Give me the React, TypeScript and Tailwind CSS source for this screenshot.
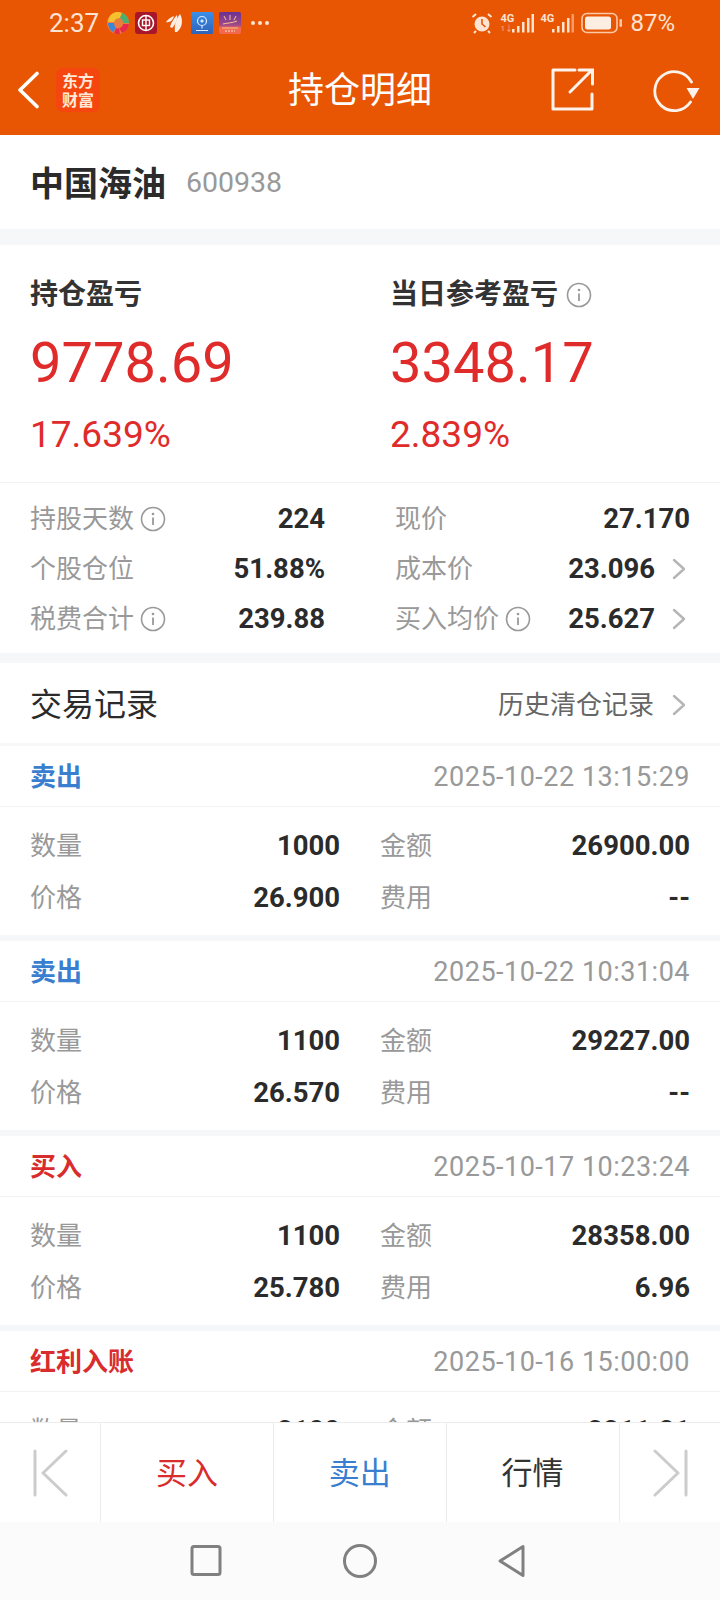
import React from "react";

const font = "font-['Roboto','Noto_Sans_CJK_SC',sans-serif]";

function Info() {
  return (
    <svg width="26" height="26" viewBox="0 0 26 26" fill="none" className="shrink-0">
      <circle cx="13" cy="13" r="11.5" stroke="#999" strokeWidth="1.6" />
      <circle cx="13" cy="8" r="1.3" fill="#999" />
      <path d="M13 11.5V19" stroke="#999" strokeWidth="1.8" />
    </svg>
  );
}

function Chev() {
  return (
    <svg width="14" height="22" viewBox="0 0 14 22" fill="none" className="shrink-0">
      <path d="M2 2l10 9-10 9" stroke="#b5b5b5" strokeWidth="2.4" strokeLinecap="round" strokeLinejoin="round" />
    </svg>
  );
}

function Stat({ label, info, value, chev }: { label: string; info?: boolean; value: string; chev?: boolean }) {
  return (
    <div className="flex h-[50px] items-center">
      <span className="text-[26px] text-[#999] leading-none">{label}</span>
      {info && <span className="ml-[6px] flex"><Info /></span>}
      <span className="ml-auto text-[27.5px] font-bold text-[#2b2b2b] leading-none">{value}</span>
      {chev && <span className="ml-[17px] mr-[4px] flex"><Chev /></span>}
    </div>
  );
}

function Cell({ label, value, pad }: { label: string; value: string; pad?: boolean }) {
  return (
    <div className={`flex h-[52px] items-center ${pad ? "pl-[40px]" : ""}`}>
      <span className="text-[26px] text-[#999] leading-none">{label}</span>
      <span className="ml-auto text-[27.5px] font-bold text-[#2b2b2b] leading-none">{value}</span>
    </div>
  );
}

function Trade({ kind, color, date, a, b, c, d }: { kind: string; color: string; date: string; a: string; b: string; c: string; d: string }) {
  return (
    <section className="bg-white mb-[6px]">
      <div className="h-[61px] flex items-center justify-between px-[30px] pt-[2px] border-b border-[#f2f2f2]">
        <span className="text-[26px] font-bold leading-none" style={{ color }}>{kind}</span>
        <span className="text-[27px] text-[#999] leading-none tracking-[0.5px]">{date}</span>
      </div>
      <div className="grid grid-cols-[310px_1fr] px-[30px] pt-[13px] pb-[11px]">
        <Cell label="数量" value={a} />
        <Cell label="金额" value={b} pad />
        <Cell label="价格" value={c} />
        <Cell label="费用" value={d} pad />
      </div>
    </section>
  );
}

function Signal({ second }: { second?: boolean }) {
  return (
    <div className={`relative w-[34px] h-[22px] ${second ? "ml-[6px]" : "ml-[7px]"}`}>
      <span className="absolute left-0 top-[1px] text-[11px] font-bold leading-none font-['Liberation_Sans_Narrow','Roboto',sans-serif]">4G</span>
      {!second && <span className="absolute left-0 top-[13px] text-[8px] leading-none text-[#fbb58a]">1↓</span>}
      <svg width="34" height="22" viewBox="0 0 34 22" className="absolute inset-0">
        <rect x="12" y="17" width="2.5" height="3.5" fill="#fde3d2" />
        <rect x="17" y="14" width="2.5" height="6.5" fill="#fde3d2" />
        <rect x="22" y="10" width="2.5" height="10.5" fill="#fde3d2" />
        <rect x="27" y="6" width="2.5" height="14.5" fill="#fde3d2" />
        <rect x="31.5" y="2" width="2.5" height="18.5" fill={second ? "#f59a6a" : "#fde3d2"} />
      </svg>
    </div>
  );
}

function StatusBar() {
  return (
    <div className="h-[46px] flex items-center pl-[49px] pr-[45px] pb-[1px] text-[#fde3d2]">
      <span className="text-[26px] leading-none">2:37</span>
      <div className="ml-[8px] flex items-center">
        <svg width="22" height="22" viewBox="0 0 22 22">
          <circle cx="11" cy="11" r="11" fill="#f5f0e6" opacity="0.25" />
          <path d="M3 4a10.5 10.5 0 0 1 12-3l-2 5c-3 0-5 1-6 4H1a11 11 0 0 1 2-6z" fill="#f7c12e" />
          <path d="M15 1a11 11 0 0 1 7 10l-6 0c0-2-1-4-3-5z" fill="#4caf6e" />
          <path d="M22 12a11 11 0 0 1-7 9l-3-5c2 0 4-2 4-4z" fill="#e8294c" />
          <path d="M13 22a11 11 0 0 1-6-1l2-5c1 1 2 1 3 0z" fill="#e8294c" />
          <path d="M6 20a11 11 0 0 1-5-9l6 0c0 2 1 4 2 5z" fill="#3b86d8" />
        </svg>
        <svg width="22" height="22" viewBox="0 0 22 22" className="ml-[6px]">
          <rect width="22" height="22" rx="3" fill="#a8162a" />
          <circle cx="11" cy="11" r="7.5" fill="none" stroke="#fff" strokeWidth="1.6" />
          <rect x="7.5" y="8" width="7" height="5.5" fill="none" stroke="#fff" strokeWidth="1.4" />
          <path d="M11 3.5v15" stroke="#fff" strokeWidth="1.4" />
        </svg>
        <svg width="18" height="18" viewBox="0 0 18 18" className="ml-[8px]">
          <path d="M1 8C3 5 6 3 9 2c-1 4-4 7-8 6z" fill="#fdeee3" />
          <path d="M5 13C6 9 9 4 12 1c1 4-1 9-5 13z" fill="#fdeee3" />
          <path d="M10 18C9 12 11 5 15 0c3 5 3 13-3 18z" fill="#fdeee3" />
        </svg>
        <svg width="22" height="22" viewBox="0 0 22 22" className="ml-[8px]">
          <defs>
            <linearGradient id="cam" x1="0" y1="0" x2="0" y2="1">
              <stop offset="0" stopColor="#3b8fe8" />
              <stop offset="1" stopColor="#2f62b8" />
            </linearGradient>
            <linearGradient id="sun" x1="0" y1="0" x2="0" y2="1">
              <stop offset="0" stopColor="#6a3096" />
              <stop offset="0.6" stopColor="#a04a8a" />
              <stop offset="0.72" stopColor="#f2694f" />
              <stop offset="1" stopColor="#f2694f" />
            </linearGradient>
          </defs>
          <rect width="22" height="22" rx="1.5" fill="url(#cam)" />
          <circle cx="11" cy="9" r="4.5" fill="none" stroke="#dbeafe" strokeWidth="1.2" />
          <circle cx="11" cy="9" r="1.6" fill="#dbeafe" />
          <path d="M11 13.5v3M5 18.5h12" stroke="#dbeafe" strokeWidth="1.2" />
        </svg>
        <svg width="22" height="22" viewBox="0 0 22 22" className="ml-[6px]">
          <rect width="22" height="22" rx="2" fill="url(#sun)" />
          <path d="M4 12c4-1 9-1 14-3M3 16h16" stroke="#f6c48b" strokeWidth="1" fill="none" />
          <path d="M11 8V3M15 8l2-4M7 8L5 4" stroke="#f6c48b" strokeWidth="1" />
          <path d="M6 19h10" stroke="#ffe3d0" strokeWidth="1" strokeDasharray="2 1" />
        </svg>
      </div>
      <span className="ml-[10px] flex gap-[3px]">
        <i className="block w-[4px] h-[4px] rounded-full bg-[#fde3d2]" />
        <i className="block w-[4px] h-[4px] rounded-full bg-[#fde3d2]" />
        <i className="block w-[4px] h-[4px] rounded-full bg-[#fde3d2]" />
      </span>
      <div className="ml-auto flex items-center">
        <svg width="22" height="22" viewBox="0 0 22 22" fill="none">
          <circle cx="11" cy="12" r="7.5" fill="#fde3d2" />
          <path d="M11 7v5l3.5 3" stroke="#e85604" strokeWidth="1.6" />
          <path d="M1.5 5L5 2M20.5 5L17 2M5 19l-2 2M17 19l2 2" stroke="#fde3d2" strokeWidth="2" />
        </svg>
        <Signal />
        <Signal second />
        <svg width="42" height="22" viewBox="0 0 42 22" fill="none" className="ml-[7px]">
          <rect x="1" y="1.5" width="35" height="19" rx="5" stroke="#fbc9a8" strokeWidth="1.6" />
          <rect x="4" y="4.5" width="26" height="13" rx="2.5" fill="#fdeee3" />
          <rect x="38.5" y="7" width="2.5" height="8" rx="1.2" fill="#fbc9a8" />
        </svg>
        <span className="ml-[7px] text-[24px] leading-none">87%</span>
      </div>
    </div>
  );
}

export default function App() {
  return (
    <div className={`w-[720px] h-[1600px] flex flex-col bg-[#f6f7f8] overflow-hidden ${font}`}>
      <header className="h-[135px] shrink-0 bg-[#e85604]">
        <StatusBar />
        <div className="h-[89px] relative flex items-center justify-center">
          <h1 className="text-[36px] leading-none text-white font-normal">持仓明细</h1>
          <div className="absolute left-[17px] top-[22px] flex items-center">
            <svg width="24" height="38" viewBox="0 0 24 38" fill="none">
              <path d="M20 2.5L3 19l17 16.5" stroke="#fff" strokeWidth="3.6" strokeLinecap="round" strokeLinejoin="round" />
            </svg>
            <div className="ml-[15px] w-[44px] h-[44px] rounded-[7px] bg-[#f5460f] flex flex-col items-center justify-center text-[#ffe9d8] text-[16px] font-bold leading-[19px] font-['Noto_Sans_CJK_SC',serif]">
              <span>东方</span>
              <span>财富</span>
            </div>
          </div>
          <svg width="44" height="44" viewBox="0 0 44 44" fill="none" className="absolute left-[551px] top-[22px]">
            <path d="M24 2H2v39h39V26" stroke="#fdf3ec" strokeWidth="3" strokeLinejoin="round" strokeLinecap="round" />
            <path d="M19 24L40 3M28 2h13.5v14" stroke="#fdf3ec" strokeWidth="3" strokeLinecap="round" />
          </svg>
          <svg width="48" height="44" viewBox="0 0 48 44" fill="none" className="absolute left-[653px] top-[22px]">
            <path d="M38.5 14A19.5 19.5 0 1 0 37.5 34" stroke="#fdf3ec" strokeWidth="2.8" strokeLinecap="round" />
            <path d="M33.5 20h13l-6.5 11z" fill="#fdf3ec" />
          </svg>
        </div>
      </header>

      <main className="flex-1 min-h-0 overflow-hidden">
        <section className="h-[94px] bg-white flex items-center pl-[30px] pt-[3px] mb-[16px]">
          <span className="text-[34px] font-bold text-[#2b2b2b] leading-none">中国海油</span>
          <span className="ml-[20px] text-[28.5px] text-[#999] leading-none">600938</span>
        </section>

        <section className="bg-white h-[238px] border-b border-[#f2f2f2] flex pl-[30px] pt-[35px]">
          <div className="w-[360px]">
            <div className="h-[30px] flex items-center text-[28px] font-bold text-[#333] leading-none">持仓盈亏</div>
            <div className="mt-[20px] text-[56px] text-[#e02b2b] leading-[66px]">9778.69</div>
            <div className="mt-[19px] text-[37px] text-[#e02b2b] leading-[40px]">17.639%</div>
          </div>
          <div>
            <div className="h-[30px] flex items-center text-[28px] font-bold text-[#333] leading-none">
              当日参考盈亏
              <span className="ml-[8px] flex"><Info /></span>
            </div>
            <div className="mt-[20px] text-[56px] text-[#e02b2b] leading-[66px]">3348.17</div>
            <div className="mt-[19px] text-[37px] text-[#e02b2b] leading-[40px]">2.839%</div>
          </div>
        </section>

        <section className="bg-white h-[170px] grid grid-cols-[295px_295px] gap-x-[70px] pl-[30px] pt-[11px] mb-[10px]">
          <div>
            <Stat label="持股天数" info value="224" />
            <Stat label="个股仓位" value="51.88%" />
            <Stat label="税费合计" info value="239.88" />
          </div>
          <div>
            <Stat label="现价" value="27.170" />
            <Stat label="成本价" value="23.096" chev />
            <Stat label="买入均价" info value="25.627" chev />
          </div>
        </section>

        <section className="bg-white h-[80px] flex items-center pl-[30px] pr-[34px] pt-[3px] mb-[3px]">
          <span className="text-[32px] text-[#2b2b2b] leading-none">交易记录</span>
          <span className="ml-auto text-[26px] text-[#666] leading-none">历史清仓记录</span>
          <span className="ml-[18px] flex"><Chev /></span>
        </section>

        <Trade kind="卖出" color="#3a7fcf" date="2025-10-22 13:15:29" a="1000" b="26900.00" c="26.900" d="--" />
        <Trade kind="卖出" color="#3a7fcf" date="2025-10-22 10:31:04" a="1100" b="29227.00" c="26.570" d="--" />
        <Trade kind="买入" color="#d92c2c" date="2025-10-17 10:23:24" a="1100" b="28358.00" c="25.780" d="6.96" />
        <Trade kind="红利入账" color="#d92c2c" date="2025-10-16 15:00:00" a="2100" b="2211.21" c="1.053" d="--" />
      </main>

      <footer className="shrink-0">
        <div className="h-[100px] bg-white border-t border-[#ececec] grid grid-cols-[101px_173px_172.5px_173px_1fr]">
          <div className="flex items-center justify-center border-r border-[#ececec]">
            <svg width="36" height="48" viewBox="0 0 36 48" fill="none" className="mr-[-2px]">
              <path d="M2 2v44" stroke="#ccc" strokeWidth="3" strokeLinecap="round" />
              <path d="M33 2L10 24l23 22" stroke="#ccc" strokeWidth="3" strokeLinecap="round" strokeLinejoin="round" />
            </svg>
          </div>
          <div className="flex items-center justify-center pt-[3px] border-r border-[#ececec] text-[31px] text-[#d92c2c]">买入</div>
          <div className="flex items-center justify-center pt-[3px] border-r border-[#ececec] text-[31px] text-[#3a7fcf]">卖出</div>
          <div className="flex items-center justify-center pt-[3px] border-r border-[#ececec] text-[31px] text-[#333]">行情</div>
          <div className="flex items-center justify-center">
            <svg width="36" height="48" viewBox="0 0 36 48" fill="none">
              <path d="M34 2v44" stroke="#ccc" strokeWidth="3" strokeLinecap="round" />
              <path d="M3 2l23 22L3 46" stroke="#ccc" strokeWidth="3" strokeLinecap="round" strokeLinejoin="round" />
            </svg>
          </div>
        </div>
        <nav className="h-[78px] bg-[#fbfbfb] relative">
          <svg width="34" height="36" viewBox="0 0 34 36" fill="none" className="absolute left-[189px] top-[21px]">
            <rect x="3" y="3.5" width="28" height="28" rx="2" stroke="#808080" strokeWidth="3" />
          </svg>
          <svg width="36" height="36" viewBox="0 0 36 36" fill="none" className="absolute left-[342px] top-[21px]">
            <circle cx="18" cy="18" r="15.5" stroke="#808080" strokeWidth="3" />
          </svg>
          <svg width="32" height="36" viewBox="0 0 32 36" fill="none" className="absolute left-[496px] top-[21px]">
            <path d="M27 3.5v29L4 18z" stroke="#808080" strokeWidth="3" strokeLinejoin="round" />
          </svg>
        </nav>
      </footer>
    </div>
  );
}
